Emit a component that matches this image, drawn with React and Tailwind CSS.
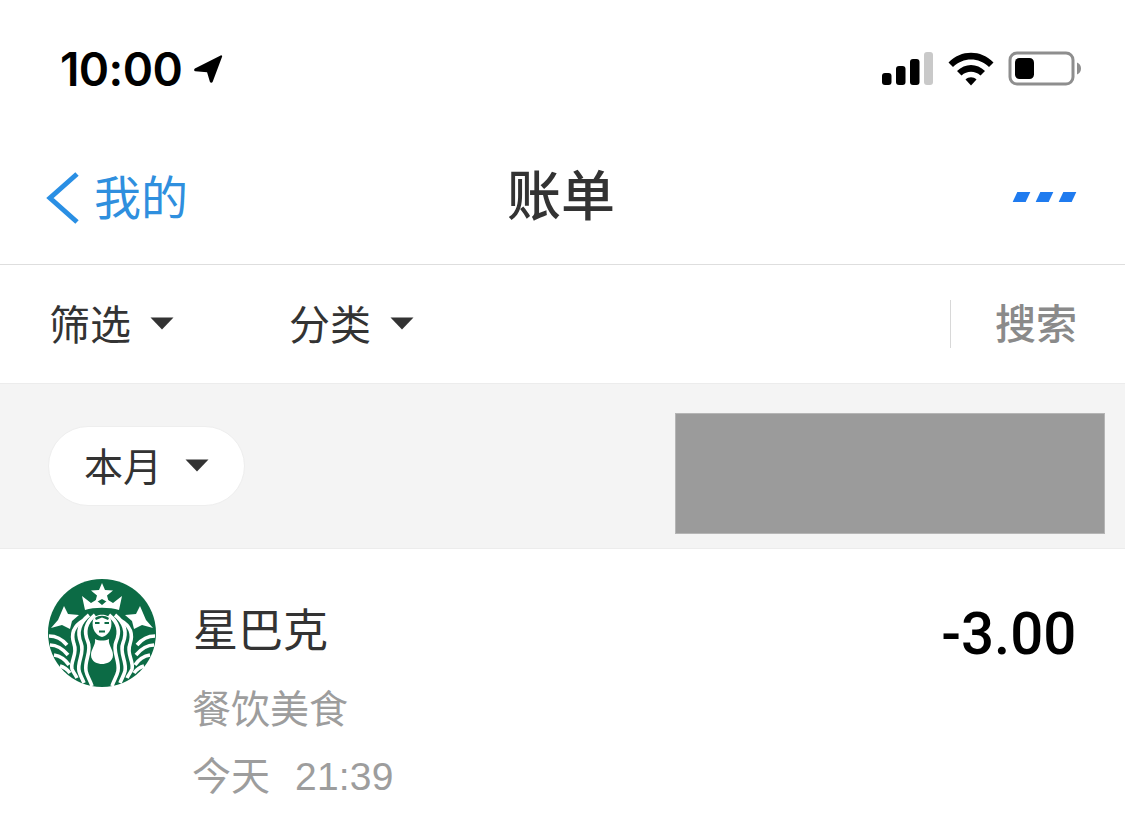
import React from 'react';

const CJK = "font-['Liberation_Sans','Noto_Sans_CJK_SC',sans-serif]";

const Caret = ({ className = '' }) => (
  <svg width="24" height="13" viewBox="0 0 24 13" className={className}>
    <path d="M0.5 0.5H23.5L12 12.5Z" fill="#333" />
  </svg>
);

const Signal = () => (
  <svg width="52" height="34" viewBox="0 0 52 34">
    <rect x="0" y="21" width="9.500" height="12" rx="3" fill="#000" />
    <rect x="14" y="14" width="9.500" height="19" rx="3" fill="#000" />
    <rect x="28" y="7" width="9.500" height="26" rx="3" fill="#000" />
    <rect x="42" y="0" width="9" height="33" rx="3" fill="#c9c9c9" />
  </svg>
);

const Wifi = () => (
  <svg width="46" height="34" viewBox="0 0 46 34">
    <path d="M0.5 10.5C13 -2.5 33 -2.5 45.5 10.5L41 15C31 5 15 5 5 15Z" fill="#000" />
    <path d="M9 19C17 11 29 11 37 19L32.5 23.5C27 18.5 19 18.5 13.5 23.5Z" fill="#000" />
    <path d="M17.5 27.5C20.5 24.5 25.5 24.5 28.5 27.5L23 33.5Z" fill="#000" />
  </svg>
);

const Battery = () => (
  <svg width="74" height="36" viewBox="0 0 74 36">
    <rect x="2" y="2" width="63" height="31" rx="7" fill="none" stroke="#8e8e8e" strokeWidth="3" />
    <rect x="7" y="7" width="19" height="21" rx="4.500" fill="#000" />
    <path d="M69 11.500C71.500 12.500 73 14.500 73 17.500C73 20.500 71.500 22.500 69 23.500Z" fill="#8e8e8e" />
  </svg>
);

const Location = () => (
  <svg width="30" height="30" viewBox="0 0 32 32">
    <path d="M2 15.500L29.500 1.500C30.500 1 31.500 2 31 3L21 29.500C20.500 31 18.500 31 18 29.500L15 19.500L2.500 18.500C1 18.300 0.800 16.200 2 15.500Z" fill="#000" />
  </svg>
);

// left half of the siren, mirrored for the right side
const SirenSide = () => (
  <>
    <path d="M16 27L20 35L31 36L24 42L22 50L14 46L3 49L10 41Z" fill="#fff" />
    <g fill="none" stroke="#fff" strokeWidth="3.600">
      <path d="M47 36C37 44 36 54 40 63C44 72 36 82 38 92C39 97 42 101 44 107" />
      <path d="M41 36C31 44 29 54 33 64C37 74 29 82 31 92C32 96 34 99 36 104" />
      <path d="M36 41C25 47 23 56 26 65C30 75 22 82 24 90C25 93 27 95 29 99" />
      <path d="M1 57C8 57 14 60 19 66" />
      <path d="M2 66C9 66 15 70 20 76" />
      <path d="M6 76C12 77 17 80 21 86" />
      <path d="M12 87C16 88 19 90 22 94" />
    </g>
  </>
);

const Starbucks = () => (
  <svg width="108" height="108" viewBox="0 0 108 108" className="shrink-0">
    <circle cx="54" cy="54" r="54" fill="#0c6b45" />
    <path d="M54 4L57 11L65 11.500L59 16.500L61 24L54 20L47 24L49 16.500L43 11.500L51 11Z" fill="#fff" />
    <path d="M34 17L43 24L48 21L54 26L60 21L65 24L74 17L71 31C62 28 46 28 37 31Z" fill="#fff" />
    <SirenSide />
    <g transform="matrix(-1 0 0 1 108 0)">
      <SirenSide />
    </g>
    {/* face and body */}
    <path d="M45 41C47 34 61 34 63 41C65 49 60 57 54 58C48 57 43 49 45 41Z" fill="#fff" />
    <path d="M47 60C48 66 43 70 43 76C43 83 50 85 54 85C58 85 65 83 65 76C65 70 60 66 61 60C57 62 51 62 47 60Z" fill="#fff" />
    <path d="M47 39C51 36 57 36 61 39L60 41L54 38.500L48 41Z" fill="#0c6b45" />
    <path d="M47 44L51.500 44M56.500 44L61 44M51 52.500L57 52.500" stroke="#0c6b45" strokeWidth="1.800" />
  </svg>
);

const FilterItem = ({ label, className = '' }) => (
  <div className={`flex items-center ${className}`}>
    <span className="mt-[4px] text-[41px] leading-none text-[#333]">{label}</span>
    <Caret className="ml-[19px] mt-[-1px]" />
  </div>
);

export default function App() {
  return (
    <div className={`w-[1125px] h-[839px] overflow-hidden bg-white ${CJK}`}>
      {/* status bar */}
      <div className="h-[132px] flex items-start justify-between pl-[60px] pr-[43px] pt-[43px]">
        <div className="flex items-center">
          <span className="text-[46px] leading-[52px] font-semibold text-black font-['Inter',sans-serif] tracking-[-0.6px]">10:00</span>
          <span className="ml-[11px]"><Location /></span>
        </div>
        <div className="flex items-center gap-[14px] pt-[8px]">
          <Signal />
          <Wifi />
          <Battery />
        </div>
      </div>

      {/* nav */}
      <div className="relative h-[133px] border-b border-[#dedede] flex items-center justify-between pl-[46px] pr-[51px]">
        <div className="flex items-center">
          <svg width="33" height="52" viewBox="0 0 33 52">
            <path d="M31 2L4 26L31 50" fill="none" stroke="#2a8fe4" strokeWidth="5" />
          </svg>
          <span className="ml-[15px] text-[47px] leading-none text-[#2f8fde]">我的</span>
        </div>
        <span className="absolute left-[507px] top-[38px] text-[54px] leading-none font-medium text-[#333]">账单</span>
        <div className="flex items-center gap-[10px] mt-[-3px]">
          <span className="w-[13px] h-[10px] bg-[#1f7bef] skew-x-[-25deg]" />
          <span className="w-[13px] h-[10px] bg-[#1f7bef] skew-x-[-25deg]" />
          <span className="w-[13px] h-[10px] bg-[#1f7bef] skew-x-[-25deg]" />
        </div>
      </div>

      {/* filter row */}
      <div className="h-[118px] flex items-center pl-[49px] pr-[48px]">
        <FilterItem label="筛选" className="w-[240px]" />
        <FilterItem label="分类" />
        <div className="ml-auto flex items-center h-[48px] border-l border-[#d8d8d8] pl-[44px]">
          <span className="mt-[2px] text-[41px] leading-none font-medium text-[#8a8a8a]">搜索</span>
        </div>
      </div>

      {/* month bar */}
      <div className="h-[166px] bg-[#f4f4f4] border-y border-[#ececec] flex items-start justify-between pl-[48px] pr-[20px]">
        <div className="mt-[42px] w-[197px] h-[80px] bg-white border border-[#eeeeee] rounded-full flex items-center pl-[36px]">
          <span className="ml-[-1px] mt-[2px] text-[39px] leading-none text-[#333]">本月</span>
          <Caret className="ml-[23px] mt-[-1px]" />
        </div>
        <div className="mt-[29px] w-[430px] h-[121px] bg-[#9b9b9b] border border-[#b5b5b5]" />
      </div>

      {/* bill row */}
      <div className="flex items-start pl-[48px] pr-[49px] pt-[30px]">
        <Starbucks />
        <div className="ml-[37px] flex flex-col">
          <span className="mt-[30px] text-[45px] leading-none text-[#333]">星巴克</span>
          <span className="mt-[36px] ml-[-1px] text-[39px] leading-none text-[#9d9d9d]">餐饮美食</span>
          <span className="mt-[28px] ml-[-1px] text-[39px] leading-none text-[#9d9d9d]">今天<span className="ml-[25px] tracking-[0.2px]">21:39</span></span>
        </div>
        <span className="ml-auto mt-[25px] text-[60px] leading-none font-medium text-black font-['Roboto',sans-serif] scale-x-[0.97] origin-right">-3.00</span>
      </div>
    </div>
  );
}
